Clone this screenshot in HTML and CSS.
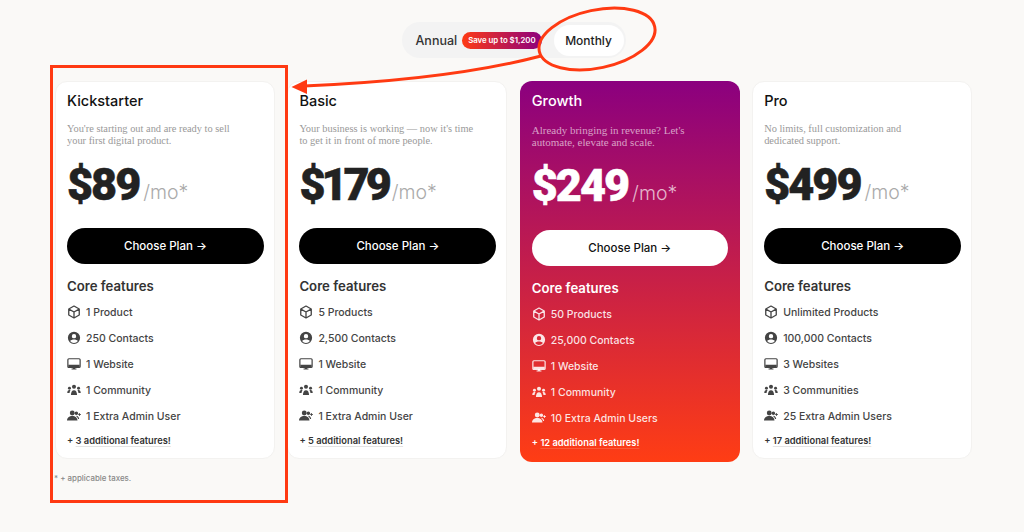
FILE: index.html
```html
<!DOCTYPE html>
<html lang="en">
<head>
  <meta charset="UTF-8">
  <title>Pricing</title>
  <link rel="stylesheet" href="styles.css">
</head>
<body>

<!-- Icon set -->
<svg class="defs" width="0" height="0">
  <symbol id="i-box" viewBox="0 0 16 16">
    <path d="M8 1.200l6 3.400v6.800l-6 3.400-6-3.400V4.600zM2.200 4.700L8 8l5.800-3.300M8 8v6.600" fill="none" stroke="currentColor" stroke-width="1.500" stroke-linejoin="round"/>
  </symbol>
  <symbol id="i-contact" viewBox="0 0 16 16">
    <path fill-rule="evenodd" d="M8 .8a7 7 0 1 1 0 14 7 7 0 0 1 0-14zM8 3.400a2.500 2.500 0 1 0 0 5 2.500 2.500 0 0 0 0-5zM3.600 11.400c1 1.400 2.600 2.200 4.400 2.200s3.400-.8 4.400-2.200c-.9-1.100-2.600-1.700-4.400-1.700s-3.500.6-4.400 1.700z" fill="currentColor"/>
  </symbol>
  <symbol id="i-screen" viewBox="0 0 16 16">
    <path d="M2.200 2h11.600c.7 0 1.200.5 1.200 1.200v7.600c0 .7-.5 1.200-1.200 1.200H2.200c-.7 0-1.200-.5-1.200-1.200V3.200C1 2.500 1.500 2 2.200 2z" fill="none" stroke="currentColor" stroke-width="1.400"/>
    <path d="M1.500 8.800h13v2.700h-13zM6.700 11.500h2.600v1.700h1.500v1.100H5.200v-1.100h1.500z" fill="currentColor"/>
  </symbol>
  <symbol id="i-group" viewBox="0 0 16 16">
    <circle cx="8" cy="4.300" r="2.300" fill="currentColor"/>
    <circle cx="2.800" cy="6" r="1.700" fill="currentColor"/>
    <circle cx="13.200" cy="6" r="1.700" fill="currentColor"/>
    <path d="M4.500 13.800c0-3.300 1.300-5.600 3.500-5.600s3.500 2.300 3.500 5.600zM.3 11.500c0-1.900.9-3.400 2.500-3.400.5 0 .9.100 1.200.3-.6.800-1 1.900-1.100 3.100zM15.700 11.500c0-1.900-.9-3.400-2.500-3.400-.5 0-.9.100-1.200.3.600.8 1 1.900 1.100 3.100z" fill="currentColor"/>
  </symbol>
  <symbol id="i-admin" viewBox="0 0 16 16">
    <circle cx="6" cy="4.500" r="2.800" fill="currentColor"/>
    <circle cx="10.700" cy="4.800" r="2" fill="currentColor"/>
    <path d="M0 13.200c0-3.200 2.500-5.300 6-5.300s6 2.100 6 5.300zM10.500 7.600c2 .2 3.200 1.700 3.400 3.800h-1.300c-.2-1.400-1-2.500-2.100-3.200z" fill="currentColor"/>
    <path d="M14.300 4.700v3.200M12.700 6.300h3.200" stroke="currentColor" stroke-width="1"/>
  </symbol>
</svg>

<!-- Billing toggle -->
<div class="toggle-row">
  <div class="toggle">
    <span class="toggle-label">Annual</span>
    <span class="save">Save up to $1,200</span>
    <span class="toggle-active">Monthly</span>
  </div>
</div>

<!-- Plans -->
<div class="plans">
  <div class="plan">
    <h3>Kickstarter</h3>
    <p class="desc">You're starting out and are ready to sell<br>your first digital product.</p>
    <div class="price"><strong>$89</strong> <span>/mo*</span></div>
    <a class="choose">Choose Plan →</a>
    <h4>Core features</h4>
    <ul>
      <li><svg><use href="#i-box"/></svg>1 Product</li>
      <li><svg><use href="#i-contact"/></svg>250 Contacts</li>
      <li><svg><use href="#i-screen"/></svg>1 Website</li>
      <li><svg><use href="#i-group"/></svg>1 Community</li>
      <li><svg><use href="#i-admin"/></svg>1 Extra Admin User</li>
    </ul>
    <p class="more">+ <u>3 additional features!</u></p>
  </div>

  <div class="plan">
    <h3>Basic</h3>
    <p class="desc">Your business is working — now it's time<br>to get it in front of more people.</p>
    <div class="price"><strong class="tight">$179</strong> <span>/mo*</span></div>
    <a class="choose">Choose Plan →</a>
    <h4>Core features</h4>
    <ul>
      <li><svg><use href="#i-box"/></svg>5 Products</li>
      <li><svg><use href="#i-contact"/></svg>2,500 Contacts</li>
      <li><svg><use href="#i-screen"/></svg>1 Website</li>
      <li><svg><use href="#i-group"/></svg>1 Community</li>
      <li><svg><use href="#i-admin"/></svg>1 Extra Admin User</li>
    </ul>
    <p class="more">+ <u>5 additional features!</u></p>
  </div>

  <div class="plan featured">
    <h3>Growth</h3>
    <p class="desc">Already bringing in revenue? Let's<br>automate, elevate and scale.</p>
    <div class="price"><strong>$249</strong> <span>/mo*</span></div>
    <a class="choose">Choose Plan →</a>
    <h4>Core features</h4>
    <ul>
      <li><svg><use href="#i-box"/></svg>50 Products</li>
      <li><svg><use href="#i-contact"/></svg>25,000 Contacts</li>
      <li><svg><use href="#i-screen"/></svg>1 Website</li>
      <li><svg><use href="#i-group"/></svg>1 Community</li>
      <li><svg><use href="#i-admin"/></svg>10 Extra Admin Users</li>
    </ul>
    <p class="more">+ <u>12 additional features!</u></p>
  </div>

  <div class="plan">
    <h3>Pro</h3>
    <p class="desc">No limits, full customization and<br>dedicated support.</p>
    <div class="price"><strong>$499</strong> <span>/mo*</span></div>
    <a class="choose">Choose Plan →</a>
    <h4>Core features</h4>
    <ul>
      <li><svg><use href="#i-box"/></svg>Unlimited Products</li>
      <li><svg><use href="#i-contact"/></svg>100,000 Contacts</li>
      <li><svg><use href="#i-screen"/></svg>3 Websites</li>
      <li><svg><use href="#i-group"/></svg>3 Communities</li>
      <li><svg><use href="#i-admin"/></svg>25 Extra Admin Users</li>
    </ul>
    <p class="more">+ <u>17 additional features!</u></p>
  </div>
</div>

<p class="note">* + applicable taxes.</p>

<!-- Red annotations drawn over the page -->
<div class="mark-box"></div>
<svg class="marks" viewBox="0 0 1024 532">
  <ellipse cx="597" cy="39" rx="59" ry="29" transform="rotate(-12 597 39)" fill="none" stroke="#ff3a12" stroke-width="3"/>
  <path d="M541 56C480 72 400 82 304 86" fill="none" stroke="#ff3a12" stroke-width="3"/>
  <path d="M291.500 87L307 79.500V94z" fill="#ff3a12"/>
</svg>

</body>
</html>
```

FILE: styles.css
```css
* {
  box-sizing: border-box;
}

body {
  margin: 0;
  height: 532px;
  overflow: hidden;
  position: relative;
  background-color: #faf9f7;
  color: #222;
  font-family: Inter, "Noto Sans", sans-serif;
}

.defs {
  position: absolute;
}

.toggle-row {
  display: flex;
  justify-content: center;
  padding: 22px 0 23px 3px;
}

.toggle {
  display: flex;
  align-items: center;
  width: 224px;
  height: 36px;
  padding: 0 2px 0 14px;
  border-radius: 18px;
  background-color: #f3f3f3;
}

.toggle-label {
  font-size: 12.500px;
  font-weight: 500;
  color: #333;
}

.save {
  margin-left: 5px;
  padding: 0 6px;
  height: 17px;
  line-height: 17px;
  border-radius: 9px;
  font-size: 7.800px;
  font-weight: 600;
  white-space: nowrap;
  color: #fff;
  background: linear-gradient(90deg, #fe3a14, #8b007f);
}

.toggle-active {
  margin-left: auto;
  width: 70px;
  height: 31px;
  line-height: 31px;
  text-align: center;
  border-radius: 16px;
  background-color: #fff;
  font-size: 12px;
  font-weight: 500;
  color: #222;
}

.plans {
  display: flex;
  gap: 12.400px;
  align-items: flex-start;
  padding-left: 55px;
}

.plan {
  width: 220px;
  height: 378px;
  padding: 10px 10px 0 11px;
  border: 1px solid #f3f2f0;
  border-radius: 12px;
  background-color: #fff;
}

.plan h3 {
  margin: 0;
  height: 17px;
  line-height: 17px;
  font-size: 14.500px;
  font-weight: 500;
  color: #111;
}

.desc {
  margin: 14px 0 0;
  height: 23px;
  line-height: 11.500px;
  font-family: "Liberation Serif", serif;
  font-size: 10.400px;
  color: #999;
}

.price {
  margin-top: 11px;
  height: 54px;
  display: flex;
  align-items: center;
  gap: 4px;
}

.price strong {
  font-family: Roboto, sans-serif;
  font-size: 45px;
  font-weight: 900;
  letter-spacing: -2px;
  -webkit-text-stroke: 0.5px currentColor;
  color: #222;
}

.price strong.tight {
  letter-spacing: -4px;
}

.price span {
  margin-top: 16px;
  font-size: 19.500px;
  font-weight: 300;
  color: #aaa;
}

.choose {
  display: block;
  margin-top: 17px;
  height: 36px;
  line-height: 36px;
  border-radius: 18px;
  background-color: #000;
  color: #fff;
  text-align: center;
  font-size: 11.500px;
  font-weight: 500;
}

.plan h4 {
  margin: 14px 0 0;
  height: 16px;
  line-height: 16px;
  font-size: 13.200px;
  font-weight: 600;
  color: #333;
}

.plan ul {
  list-style: none;
  margin: 5px 0 0;
  padding: 0;
}

.plan li {
  display: flex;
  align-items: center;
  gap: 5px;
  height: 26px;
  font-size: 10.500px;
  font-weight: 500;
  color: #444;
}

.plan li svg {
  width: 14px;
  height: 14px;
  flex: none;
}

.more {
  margin: 6px 0 0;
  line-height: 12px;
  font-size: 9.300px;
  font-weight: 600;
  color: #333;
}

.more u {
  text-decoration-color: #e4e4e4;
  text-underline-offset: 2px;
}

/* Highlighted plan */
.featured {
  height: 381px;
  border: 0;
  padding: 11px 12px 0;
  background: linear-gradient(180deg, #8b007f, #ff3d14);
  color: #fff;
}

.featured h3,
.featured h4,
.featured li,
.featured .more,
.featured .price strong {
  color: #fff;
}

.featured li {
  color: rgba(255, 255, 255, 0.88);
}

.featured .desc {
  margin-top: 15px;
  height: 24px;
  line-height: 12px;
  font-size: 11px;
  color: rgba(255, 255, 255, 0.62);
}

.featured .price {
  margin-top: 10px;
}

.featured .price span {
  color: rgba(255, 255, 255, 0.7);
}

.featured .choose {
  margin-top: 18px;
  background-color: #fff;
  color: #111;
}

.featured .more u {
  text-decoration-color: rgba(255, 255, 255, 0.15);
}

.note {
  margin: 11px 0 0 54px;
  font-size: 7.900px;
  font-weight: 500;
  color: #888;
}

.mark-box {
  position: absolute;
  left: 50px;
  top: 65px;
  width: 238px;
  height: 438px;
  border: 3px solid #ff3a12;
}

.marks {
  position: absolute;
  left: 0;
  top: 0;
  width: 1024px;
  height: 532px;
  pointer-events: none;
}
```
